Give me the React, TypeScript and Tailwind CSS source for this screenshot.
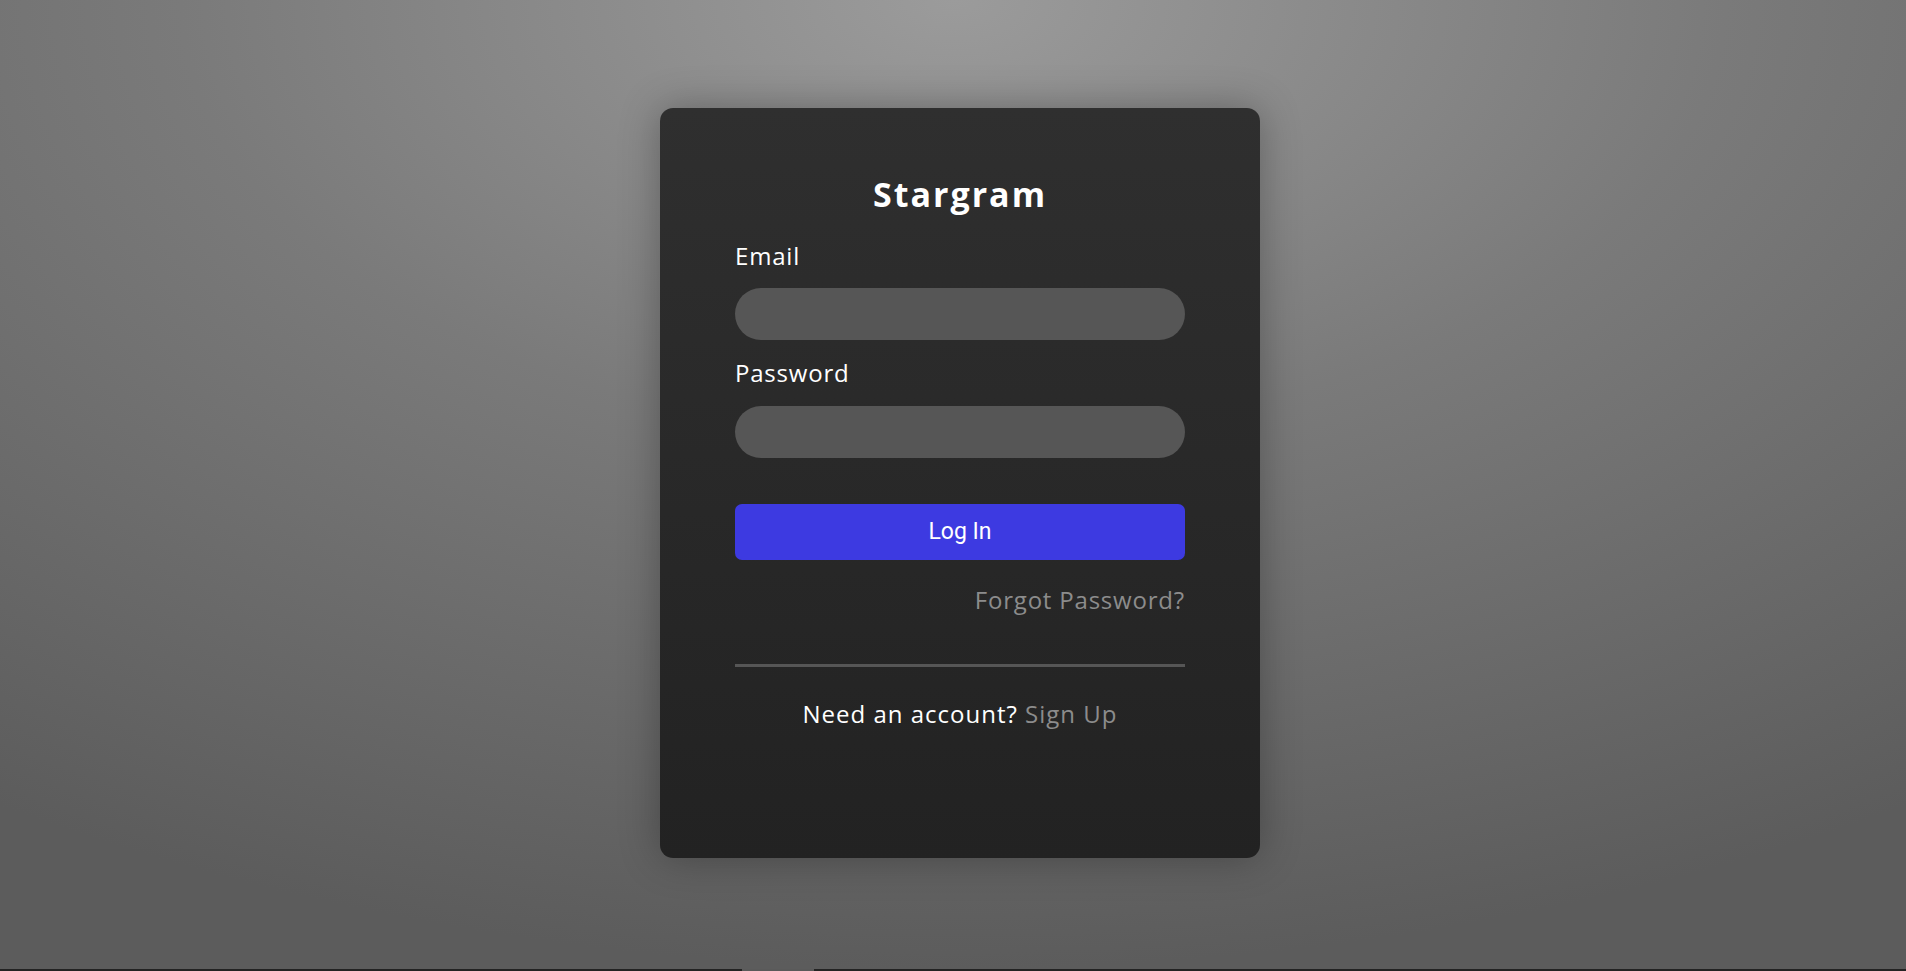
export default function App() {
    return (
        <div className="w-full font-['Open_Sans',sans-serif]">
            {/* Backdrop */}
            <main className="h-[969px] w-full flex justify-center pl-[14px] pt-[108px] bg-[radial-gradient(ellipse_90%_100%_at_50%_0%,#9b9b9b_0%,#7a7a7a_45%,#5c5c5c_100%)]">
                {/* Login card */}
                <div className="w-[600px] h-[750px] rounded-[13px] px-[75px] pt-[69px] bg-[linear-gradient(to_bottom,#2f2f2f,#222222)] shadow-[0_0_40px_rgba(0,0,0,0.3)]">
                    <h1 className="text-center text-[34px] leading-none font-bold tracking-[2px] text-white">Stargram</h1>

                    <form className="flex flex-col mt-[33px]" onSubmit={e => e.preventDefault()}>
                        <label htmlFor="email" className="text-[24px] leading-none tracking-[0.8px] text-white">Email</label>
                        <input id="email" type="email" className="mt-[20px] h-[52px] rounded-full bg-[#565656] px-6 text-white outline-none" />

                        <label htmlFor="password" className="mt-[21px] text-[24px] leading-none tracking-[0.8px] text-white">Password</label>
                        <input id="password" type="password" className="mt-[21px] h-[52px] rounded-full bg-[#565656] px-6 text-white outline-none" />

                        <button type="submit" className="mt-[46px] h-[56px] rounded-[7px] bg-[#3d3ae1] text-white text-[23px] font-['Roboto',sans-serif]">
                            Log In
                        </button>
                    </form>

                    <div className="mt-[28px] text-right">
                        <a href="#" className="text-[24px] leading-none tracking-[0.8px] text-[#8c8c8c]">Forgot Password?</a>
                    </div>

                    <hr className="mt-[49px] border-0 h-[3px] bg-[#565656]" />

                    <p className="mt-[35px] text-center text-[24px] leading-none tracking-[1px] text-white">
                        Need an account? <a href="#" className="text-[#8c8c8c]">Sign Up</a>
                    </p>
                </div>
            </main>
            <div className="h-[2px] bg-[#232323] flex">
                <div className="ml-[742px] w-[72px] bg-[#5a5a5a]" />
            </div>
        </div>
    );
}
